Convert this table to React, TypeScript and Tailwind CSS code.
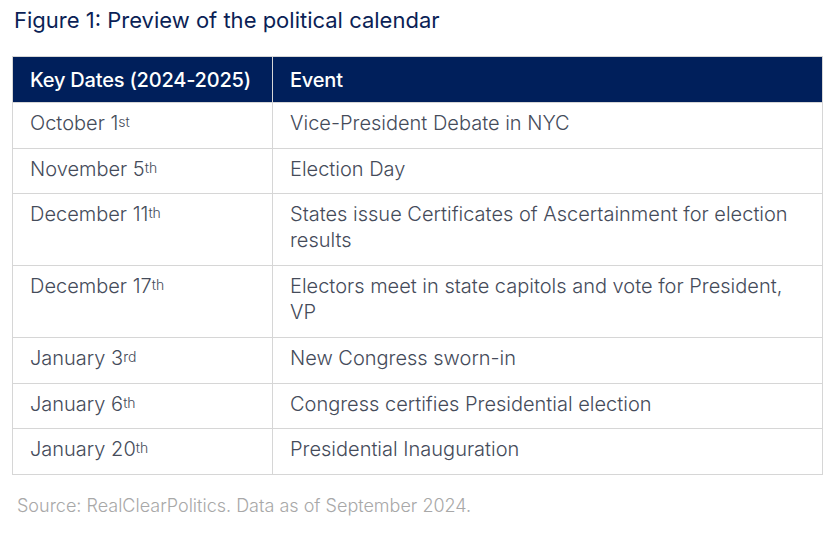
import React from "react";

const rows: { d: string; s: string; e: string; two?: boolean }[] = [
  { d: "October 1", s: "st", e: "Vice-President Debate in NYC" },
  { d: "November 5", s: "th", e: "Election Day" },
  { d: "December 11", s: "th", e: "States issue Certificates of Ascertainment for election results", two: true },
  { d: "December 17", s: "th", e: "Electors meet in state capitols and vote for President, VP", two: true },
  { d: "January 3", s: "rd", e: "New Congress sworn-in" },
  { d: "January 6", s: "th", e: "Congress certifies Presidential election" },
  { d: "January 20", s: "th", e: "Presidential Inauguration" },
];

export default function App() {
  return (
    <div className="w-[837px] h-[541px] bg-white" style={{ fontFamily: "Inter, 'Liberation Sans', sans-serif" }}>
      <div className="pt-[6px] pl-[14px] text-[22px] leading-[28px] text-[#0b1f56]">
        Figure 1: Preview of the political calendar
      </div>
      <table className="ml-[12px] mt-[22px] w-[810px] border-collapse table-fixed">
        <colgroup>
          <col className="w-[260px]" />
          <col className="w-[550px]" />
        </colgroup>
        <thead>
          <tr className="bg-[#001f5b] text-white">
            <th className="h-[46px] border border-[#d6d6d6] pl-[17px] text-left font-medium text-[20px] tracking-[-0.2px]">Key Dates (2024-2025)</th>
            <th className="h-[46px] border border-[#d6d6d6] pl-[17px] text-left font-medium text-[20px] tracking-[-0.2px]">Event</th>
          </tr>
        </thead>
        <tbody className="text-[20px] leading-[26px] font-light text-[#454b5a]">
          {rows.map((r, i) => (
            <tr key={i}>
              <td className={`border border-[#d6d6d6] pl-[17px] align-top pt-[7px] ${r.two ? "h-[72px]" : "h-[45.5px]"}`}>
                {r.d}
                <sup className="text-[14px] relative -top-[3px]">{r.s}</sup>
              </td>
              <td className={`border border-[#d6d6d6] pl-[17px] pr-[24px] align-top pt-[7px] ${r.two ? "h-[72px]" : "h-[45.5px]"}`}>
                {r.e}
              </td>
            </tr>
          ))}
        </tbody>
      </table>
      <div className="pl-[17px] mt-[19px] text-[18px] leading-[24px] font-light text-[#a8a8a8]">
        Source: RealClearPolitics. Data as of September 2024.
      </div>
    </div>
  );
}
